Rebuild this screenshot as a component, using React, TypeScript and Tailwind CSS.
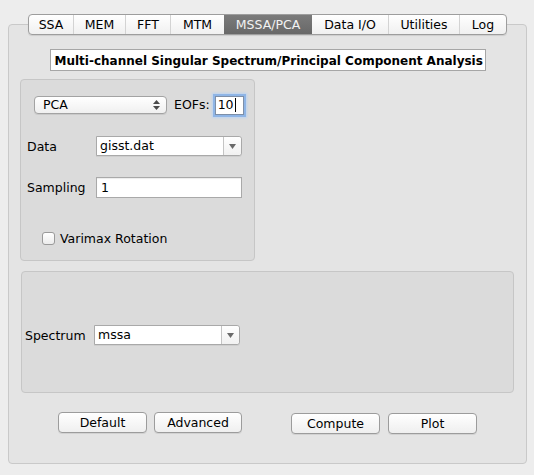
const tabs = [
  { label: 'SSA', w: 45 },
  { label: 'MEM', w: 52 },
  { label: 'FFT', w: 45 },
  { label: 'MTM', w: 54 },
  { label: 'MSSA/PCA', w: 88, active: true },
  { label: 'Data I/O', w: 76 },
  { label: 'Utilities', w: 71 },
  { label: 'Log', w: 47 },
];

function ComboBox({ value, width }: { value: string; width: number }) {
  return (
    <div
      className="flex h-[20px] items-stretch rounded-r-[3px] border border-[#a9a9a9] bg-white shadow-[0_1px_0_rgba(0,0,0,0.06)]"
      style={{ width }}
    >
      <div className="flex flex-1 items-center pl-[3px] pt-px text-[12.5px] leading-none">{value}</div>
      <div className="flex w-[18px] items-center justify-center border-l border-[#c4c4c4] bg-gradient-to-b from-[#ffffff] to-[#f1f1f1] rounded-r-[3px]">
        <svg width="7" height="5" viewBox="0 0 7 5">
          <path d="M0 0 H7 L3.5 5 Z" fill="#6a6a6a" />
        </svg>
      </div>
    </div>
  );
}

function PushButton({ label, width }: { label: string; width: number }) {
  return (
    <button
      className="flex h-[21px] items-center justify-center rounded-[4px] border border-[#9c9c9c] bg-gradient-to-b from-[#ffffff] to-[#efefef] pt-[2px] text-[12.5px] leading-none text-black shadow-[0_1px_0_rgba(0,0,0,0.08)]"
      style={{ width }}
    >
      {label}
    </button>
  );
}

export default function App() {
  return (
    <div
      className="h-[475px] w-[534px] overflow-hidden bg-[#ededed] pt-[24px] text-black"
      style={{ fontFamily: '"DejaVu Sans", Verdana, sans-serif' }}
    >
      {/* tab pane */}
      <div className="ml-[8px] mr-[7px] flex h-[440px] flex-col rounded-[4px] border border-[#c9c9c9] bg-[#e4e4e4]">
        {/* tab bar sits over the pane border */}
        <div className="-mt-[11px] flex justify-center">
          <div className="flex h-[21px] overflow-hidden rounded-[4px] border border-[#9d9d9d] bg-gradient-to-b from-[#ffffff] to-[#f0f0f0] shadow-[0_1px_1px_rgba(0,0,0,0.1)]">
            {tabs.map((t, i) => (
              <div
                key={t.label}
                className={
                  t.active
                    ? 'flex items-center justify-center bg-gradient-to-b from-[#7b7b7b] to-[#686868] pt-px text-[12.5px] leading-none text-[#f2f2f2]'
                    : 'flex items-center justify-center pt-px text-[12.5px] leading-none text-black ' +
                      (i > 0 && !tabs[i - 1].active ? 'border-l border-[#d3d3d3]' : '')
                }
                style={{ width: i === 0 ? t.w - 1 : t.w }}
              >
                {t.label}
              </div>
            ))}
          </div>
        </div>

        {/* title */}
        <div className="mt-[14px] flex justify-center">
          <div className="flex h-[22px] w-[436px] items-center border border-[#a6a6a6] bg-white pl-[4px] pt-px text-[12px] font-bold leading-none">
            Multi-channel Singular Spectrum/Principal Component Analysis
          </div>
        </div>

        <div className="ml-[11px] mr-[12px] mt-[8px] flex flex-col">
          {/* group 1 */}
          <div className="flex h-[182px] w-[235px] flex-col rounded-[4px] border border-[#c6c6c6] bg-[#dbdbdb]">
            <div className="ml-[13px] mt-[16px] flex h-[18px] items-center">
              <div className="flex h-[18px] w-[133px] items-center justify-between rounded-[4px] border border-[#a3a3a3] bg-gradient-to-b from-[#ffffff] to-[#f0f0f0] pl-[8px] pr-[6px] text-[12.5px] leading-none shadow-[0_1px_0_rgba(0,0,0,0.08)]">
                <span>PCA</span>
                <svg width="7" height="10" viewBox="0 0 7 10">
                  <path d="M0 4 L3.5 0 L7 4 Z M0 6 L3.5 10 L7 6 Z" fill="#4a4a4a" />
                </svg>
              </div>
              <span className="ml-[7px] text-[12.5px] leading-none">EOFs:</span>
              <div className="ml-[5px] flex h-[19px] w-[29px] items-center border border-[#7d8fa8] bg-white pl-[2px] text-[12.5px] leading-none shadow-[0_0_0_2px_#8fb5e6,0_0_2px_3px_#bcd3f0]">
                10<span className="ml-px inline-block h-[14px] w-px bg-black" />
              </div>
            </div>

            <div className="mt-[22px] flex h-[20px] items-center">
              <span className="w-[75px] pl-[6px] pt-[2px] text-[12.5px] leading-none">Data</span>
              <ComboBox value="gisst.dat" width={146} />
            </div>

            <div className="mt-[21px] flex h-[21px] items-center">
              <span className="w-[75px] pl-[6px] pt-[2px] text-[12.5px] leading-none">Sampling</span>
              <div className="flex h-[21px] w-[146px] items-center border border-[#a9a9a9] bg-white pl-[4px] pt-px text-[12.5px] leading-none shadow-[inset_0_1px_1px_rgba(0,0,0,0.08)]">
                1
              </div>
            </div>

            <div className="ml-[21px] mt-[34px] flex h-[13px] items-center">
              <div className="h-[13px] w-[13px] rounded-[3px] border border-[#9a9a9a] bg-gradient-to-b from-[#ffffff] to-[#ececec]" />
              <span className="ml-[5px] pt-px text-[12.5px] leading-none">Varimax Rotation</span>
            </div>
          </div>

          {/* group 2 */}
          <div className="ml-px mt-[10px] flex h-[122px] flex-col rounded-[4px] border border-[#c6c6c6] bg-[#dbdbdb]">
            <div className="mt-[53px] flex h-[20px] items-center">
              <span className="w-[72px] pl-[3px] pt-[2px] text-[12.5px] leading-none">Spectrum</span>
              <ComboBox value="mssa" width={146} />
            </div>
          </div>
        </div>

        {/* buttons */}
        <div className="ml-[49px] mt-[19px] flex items-start">
          <PushButton label="Default" width={89} />
          <div className="ml-[7px]">
            <PushButton label="Advanced" width={88} />
          </div>
          <div className="ml-[49px] mt-px">
            <PushButton label="Compute" width={89} />
          </div>
          <div className="ml-[8px] mt-px">
            <PushButton label="Plot" width={89} />
          </div>
        </div>
      </div>
    </div>
  );
}
